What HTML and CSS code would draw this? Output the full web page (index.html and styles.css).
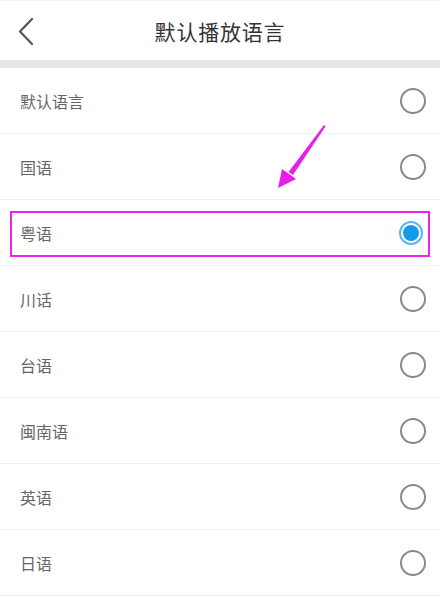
FILE: index.html
```html
<!DOCTYPE html>
<html lang="zh">
<head>
<meta charset="utf-8">
<title>默认播放语言</title>
<link rel="stylesheet" href="styles.css">
</head>
<body>
<div class="page">
  <header class="topbar">
    <span class="back">
      <svg width="16" height="28" viewBox="0 0 16 28"><path d="M14 1 L2 13.5 L14 26" fill="none" stroke="#555" stroke-width="2.2" stroke-linecap="round" stroke-linejoin="round"/></svg>
    </span>
    <h1 class="title">默认播放语言</h1>
  </header>
  <div class="divider"></div>
  <ul class="list">
    <li class="row"><span class="label">默认语言</span><span class="radio"></span></li>
    <li class="row"><span class="label">国语</span><span class="radio"></span></li>
    <li class="row row-selected"><span class="label">粤语</span><span class="radio radio-on"></span><span class="highlight"></span></li>
    <li class="row"><span class="label">川话</span><span class="radio"></span></li>
    <li class="row"><span class="label">台语</span><span class="radio"></span></li>
    <li class="row"><span class="label">闽南语</span><span class="radio"></span></li>
    <li class="row"><span class="label">英语</span><span class="radio"></span></li>
    <li class="row"><span class="label">日语</span><span class="radio"></span></li>
  </ul>
  <svg class="arrow" width="440" height="597" viewBox="0 0 440 597">
    <path d="M324 125 L325.5 126.5 L293 175 L288.5 172 Z" fill="#e81ee8"/>
    <path d="M278 188 L282 169 L296 179 Z" fill="#e81ee8"/>
  </svg>
</div>
</body>
</html>
```

FILE: styles.css
```css
html, body {
  margin: 0;
  padding: 0;
  background: #ffffff;
}
body {
  font-family: "Noto Sans CJK SC", "Noto Sans", sans-serif;
  width: 440px;
  height: 597px;
  overflow: hidden;
}
.page {
  position: relative;
  width: 440px;
  height: 597px;
}
.topbar {
  height: 60px;
  display: flex;
  align-items: center;
  justify-content: center;
  position: relative;
  border-top: 1px solid #f2f2f2;
  box-sizing: border-box;
}
.back {
  position: absolute;
  left: 18px;
  top: 17px;
  display: flex;
}
.title {
  margin: 0;
  font-size: 21px;
  font-weight: 400;
  color: #333333;
  letter-spacing: 0.8px;
}
.divider {
  height: 8px;
  background: #e6e6e6;
}
.list {
  list-style: none;
  margin: 0;
  padding: 0;
}
.row {
  position: relative;
  height: 65px;
  border-bottom: 1px solid #efefef;
  display: flex;
  align-items: center;
  justify-content: space-between;
  padding: 0 14px 0 20px;
}
.label {
  font-size: 16px;
  color: #666666;
}
.radio {
  width: 26px;
  height: 26px;
  border: 2px solid #8a8a8a;
  border-radius: 50%;
  box-sizing: border-box;
}
.radio-on {
  width: 24px;
  height: 24px;
  border: 2px solid #5bb6ec;
  display: flex;
  align-items: center;
  justify-content: center;
  margin-right: 3px;
}
.radio-on::after {
  content: "";
  width: 16px;
  height: 16px;
  border-radius: 50%;
  background: #129bea;
}
.highlight {
  position: absolute;
  left: 10px;
  right: 10px;
  top: 11px;
  bottom: 8px;
  border: 2px solid #ee22ee;
}
.arrow {
  position: absolute;
  left: 0;
  top: 0;
  pointer-events: none;
}
```
